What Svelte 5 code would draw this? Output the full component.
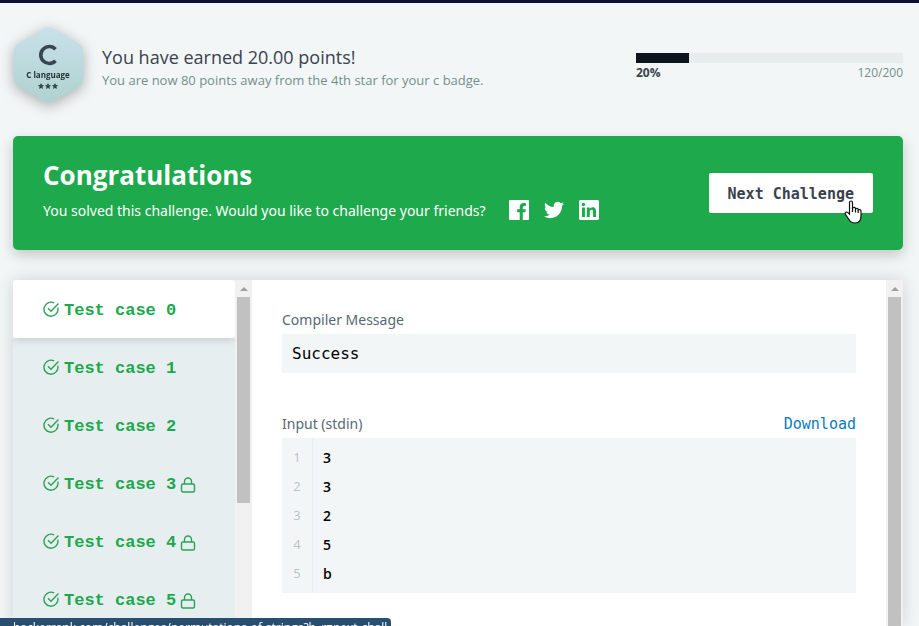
<script>
  const cases = [
    { label: 'Test case 0', locked: false },
    { label: 'Test case 1', locked: false },
    { label: 'Test case 2', locked: false },
    { label: 'Test case 3', locked: true },
    { label: 'Test case 4', locked: true },
    { label: 'Test case 5', locked: true }
  ];
  const input = ['3', '3', '2', '5', 'b'];
  const progress = 20;
  let selected = $state(0);
</script>

<div class="page">
  <header class="summary">
    <svg class="badge" viewBox="0 0 72 78" role="img" aria-label="C language badge, three stars">
      <defs>
        <linearGradient id="badge-fill" x1="0" y1="0" x2="0" y2="1">
          <stop offset="0" stop-color="#c8e1ea" />
          <stop offset="1" stop-color="#b0d2cf" />
        </linearGradient>
      </defs>
      <path d="M32 2.2Q36 0 40 2.2L66 17.8Q70 20 70 24.500V53.500Q70 58 66 60.200L40 75.800Q36 78 32 75.800L5 60.200Q1 58 1 53.500V24.500Q1 20 5 17.800Z" fill="url(#badge-fill)" />
      <path d="M42.500 23.200A8.500 8.500 0 1 0 42.500 34.800" fill="none" stroke="#37474f" stroke-width="3.600" />
      <text x="35" y="52" text-anchor="middle">C language</text>
      <g fill="#37474f">
        {#each [28, 35, 42] as x}
          <path transform="translate({x} 60)" d="M0-3L1-1 3.100-.8 1.500.8 1.900 2.900 0 1.900-1.900 2.900-1.500.8-3.100-.8-1-1Z" />
        {/each}
      </g>
    </svg>
    <div class="earned">
      <h1>You have earned 20.00 points!</h1>
      <p>You are now 80 points away from the 4th star for your c badge.</p>
    </div>
    <div class="progress">
      <div class="track" role="progressbar" aria-label="Badge progress" aria-valuenow={progress} aria-valuemin="0" aria-valuemax="100">
        <div class="bar" style="width: {progress}%"></div>
      </div>
      <div class="figures"><strong>{progress}%</strong><span>120/200</span></div>
    </div>
  </header>

  <section class="banner">
    <div class="message">
      <h2>Congratulations</h2>
      <div class="share">
        <p>You solved this challenge. Would you like to challenge your friends?</p>
        <a href="#facebook" aria-label="Share on Facebook">
          <svg width="20" height="20" viewBox="0 0 20 20" fill="#fff"><path d="M1.100 0H18.900Q20 0 20 1.100V18.900Q20 20 18.900 20H13.800V12.300H16.400L16.800 9.300H13.800V7.400C13.800 6.500 14.100 5.900 15.300 5.900H16.900V3.200C16.600 3.200 15.700 3.100 14.600 3.100C12.300 3.100 10.700 4.500 10.700 7.100V9.300H8.100V12.300H10.700V20H1.100Q0 20 0 18.900V1.100Q0 0 1.100 0Z" /></svg>
        </a>
        <a href="#twitter" aria-label="Share on Twitter">
          <svg width="20" height="20" viewBox="0 0 24 24" fill="#fff"><path d="M23.950 4.570a10 10 0 0 1-2.820.77 4.960 4.960 0 0 0 2.160-2.720c-.95.55-2 .95-3.130 1.180a4.920 4.920 0 0 0-8.380 4.480C7.690 8.090 4.070 6.130 1.640 3.160a4.820 4.820 0 0 0-.67 2.480c0 1.710.87 3.210 2.190 4.100a4.900 4.900 0 0 1-2.230-.62v.06a4.920 4.920 0 0 0 3.950 4.830 5 5 0 0 1-2.210.08 4.940 4.940 0 0 0 4.600 3.420A9.870 9.870 0 0 1 0 19.540a14 14 0 0 0 7.550 2.210c9.050 0 14-7.500 14-13.980 0-.21 0-.42-.02-.63a9.940 9.940 0 0 0 2.420-2.570z" /></svg>
        </a>
        <a href="#linkedin" aria-label="Share on LinkedIn">
          <svg width="20" height="20" viewBox="0 0 24 24" fill="#fff"><path d="M20.450 20.450h-3.560v-5.570c0-1.330-.02-3.040-1.850-3.040-1.850 0-2.130 1.450-2.130 2.940v5.670H9.350V9h3.410v1.560h.05c.48-.9 1.640-1.850 3.370-1.850 3.600 0 4.270 2.370 4.270 5.460v6.280zM5.340 7.430a2.060 2.060 0 1 1 0-4.130 2.060 2.060 0 0 1 0 4.130zm1.780 13.020H3.560V9h3.560v11.450zM22.220 0H1.770C.79 0 0 .77 0 1.730v20.540C0 23.230.79 24 1.770 24h20.450c.98 0 1.780-.77 1.780-1.730V1.730C24 .77 23.200 0 22.220 0z" /></svg>
        </a>
      </div>
    </div>
    <button class="next">
      Next Challenge
      <svg class="pointer" width="18" height="24" viewBox="0 0 18 24" aria-hidden="true">
        <path d="M5.500 14V2.500Q5.500 1 7 1T8.500 2.500V8Q11 6.500 11.500 8.800Q14 7.500 14.200 9.700Q17 9 17 11.500V16Q17 23 11 23Q7 23 5 19.500L1.500 14.500Q.5 12.500 2.300 12Q3.500 12 5.500 14Z" fill="#fff" stroke="#111" stroke-width="1.200" />
        <path d="M8.500 8V12M11.500 9V12.500M14.200 10V13" fill="none" stroke="#111" stroke-width="1.200" />
      </svg>
    </button>
  </section>

  <section class="results">
    <nav class="cases" aria-label="Test cases">
      {#each cases as item, i}
        <button class="case" class:active={selected === i} onclick={() => (selected = i)}>
          <svg class="check" width="17" height="17" viewBox="0 0 17 17" aria-hidden="true"><path d="M14.800 6.700A7 7 0 1 1 11.200 2M5 7.200L8 10.200L15.500 2.500" /></svg>
          <span>{item.label}</span>
          {#if item.locked}
            <svg class="lock" width="16" height="16" viewBox="0 0 16 16" aria-label="Locked"><rect x="1.500" y="7" width="13" height="8" rx="1.500" /><path d="M4.500 7V4.500a3.500 3.500 0 0 1 7 0V7" /></svg>
          {/if}
        </button>
      {/each}
    </nav>
    <div class="scroll" aria-hidden="true"><i></i><div class="thumb short"></div></div>
    <div class="output">
      <h3>Compiler Message</h3>
      <pre class="compiler">Success</pre>
      <div class="heading">
        <h3>Input (stdin)</h3>
        <a href="#download">Download</a>
      </div>
      <ol class="code">
        {#each input as line, i}
          <li><span class="number">{i + 1}</span><code>{line}</code></li>
        {/each}
      </ol>
    </div>
    <div class="scroll" aria-hidden="true"><i></i><div class="thumb"></div></div>
  </section>
</div>
<div class="status">hackerrank.com/challenges/permutations-of-strings?h_r=next-chall...</div>

<style>
  :global(body) { background: #f3f6f7; overflow: hidden; }
  .page {
    box-sizing: border-box;
    height: 100vh;
    display: flex;
    flex-direction: column;
    padding: 0 16px 0 13px;
    border-top: 3px solid #0c1033;
    font-family: 'Open Sans', 'Noto Sans', sans-serif;
    color: #39424e;
  }
  h1, h2, h3, p, pre, ol { margin: 0; padding: 0; font-weight: 400; }
  button { border: 0; cursor: pointer; }
  a { text-decoration: none; }
  .summary { display: flex; align-items: center; height: 133px; flex: none; padding-bottom: 9px; box-sizing: border-box; }
  .badge { width: 72px; height: 78px; flex: none; filter: drop-shadow(0 3px 7px rgba(0, 0, 0, 0.3)); }
  .badge text { font: 700 8px 'Open Sans', sans-serif; fill: #263238; }
  .earned { flex: 1; margin-left: 17px; padding-top: 6px; }
  h1 { font-size: 18px; line-height: 24px; }
  .earned p { font-size: 13px; line-height: 22px; color: #738f8c; }
  .progress { width: 30%; padding-top: 6px; }
  .track { height: 10px; background: #e7ecec; }
  .bar { height: 100%; background: #0e141e; }
  .figures { display: flex; justify-content: space-between; font-size: 12px; line-height: 20px; color: #738f8c; }
  .figures strong { color: #39424e; }
  .banner {
    flex: none;
    display: flex;
    align-items: center;
    justify-content: space-between;
    height: 114px;
    box-sizing: border-box;
    padding: 0 30px;
    border-radius: 5px;
    background: #1ea94c;
    color: #fff;
    box-shadow: 0 5px 14px rgba(0, 0, 0, 0.2);
  }
  .message { padding-bottom: 2px; }
  h2 { font-size: 26px; line-height: 36px; font-weight: 700; }
  .share { display: flex; align-items: center; gap: 15px; height: 34px; }
  .share p { font-family: 'Noto Sans', sans-serif; font-size: 14px; margin-right: 8px; }
  .share a, .share svg { display: block; }
  .next {
    position: relative;
    height: 40px;
    padding: 2px 19px 0;
    border-radius: 2px;
    background: #fff;
    color: #39424e;
    font: 700 15px/38px 'DejaVu Sans Mono', monospace;
  }
  .pointer { position: absolute; right: 11px; bottom: -11px; }
  .results {
    flex: 1;
    min-height: 0;
    display: flex;
    margin-top: 30px;
    background: #fff;
    box-shadow: 0 0 16px rgba(0, 0, 0, 0.15);
  }
  .cases { width: 222px; flex: none; overflow: hidden; background: #e7eeef; }
  .case {
    display: flex;
    align-items: center;
    gap: 4px;
    width: 100%;
    height: 58px;
    padding: 0 30px;
    background: transparent;
    color: #1ba94c;
    font: 700 17px 'Liberation Mono', monospace;
  }
  .case span { padding-top: 2px; }
  .case.active { background: #fff; border-radius: 2px; box-shadow: 0 2px 8px rgba(0, 0, 0, 0.15); }
  .check, .lock { flex: none; fill: none; stroke: #2ba257; stroke-width: 1.4; }
  .lock { margin-top: 4px; }
  .scroll { width: 17px; flex: none; background: #f1f1f1; display: flex; flex-direction: column; align-items: center; }
  .scroll i { margin: 7px 0 6px; border: 4px solid transparent; border-top: 0; border-bottom-color: #a0a0a0; }
  .thumb { width: 13px; flex: 1; background: #c1c1c1; }
  .thumb.short { flex: 0 0 calc(60% - 2px); }
  .output { flex: 1; min-width: 0; padding: 30px; overflow: hidden; }
  h3 { font-family: 'Noto Sans', sans-serif; font-size: 14px; line-height: 20px; color: #576871; }
  .compiler {
    margin: 4px 0 41px;
    padding: 0 10px;
    background: #f3f6f7;
    color: #000;
    font: 16px/39px 'DejaVu Sans Mono', monospace;
  }
  .heading { display: flex; justify-content: space-between; }
  .heading a { color: #097bbf; font: 15px/20px 'DejaVu Sans Mono', monospace; }
  .code { list-style: none; margin-top: 4px; background: #f3f6f7; }
  .code li { display: flex; line-height: 29px; }
  .code li:first-child > * { padding-top: 5px; }
  .code li:last-child > * { padding-bottom: 5px; }
  .number { width: 30px; text-align: center; font-size: 13px; color: #b8c3c5; border-right: 1px solid #e7eeef; }
  code { margin-left: 10px; font: 600 14px/29px 'Open Sans', sans-serif; color: #000; }
  .status {
    position: fixed;
    left: 0;
    bottom: 0;
    width: 391px;
    height: 8px;
    box-sizing: border-box;
    padding-left: 13px;
    overflow: hidden;
    white-space: nowrap;
    border-top-right-radius: 4px;
    background: #294f70;
    color: #fff;
    font: 12px/20px 'Open Sans', sans-serif;
  }
</style>
